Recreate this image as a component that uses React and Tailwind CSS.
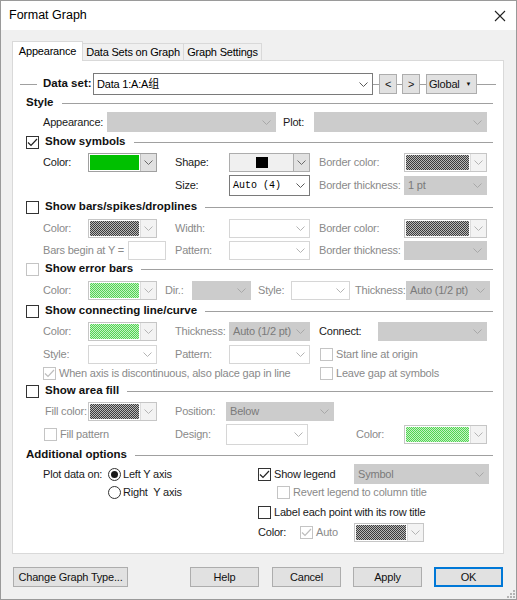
import React from 'react';

const sans = "font-['Liberation_Sans','Noto_Sans_CJK_SC',sans-serif]";

const grayChecker = 'bg-[image:repeating-conic-gradient(#3c3c3c_0_25%,#b8b8b8_0_50%)] bg-[length:2px_2px]';
const greenChecker = 'bg-[image:repeating-conic-gradient(#52d452_0_25%,#c4f2c4_0_50%)] bg-[length:2px_2px]';

function Chevron({ color = '#5a5a5a' }) {
  return (
    <svg width="9" height="5" viewBox="0 0 9 5">
      <polyline points="0.5,0.5 4.5,4.5 8.5,0.5" fill="none" stroke={color} strokeWidth="1" />
    </svg>
  );
}

function Combo({ className = '', kind = 'white', text, mono, h = 'h-[19px]' }) {
  const box = {
    white: 'border-[#7a7a7a] bg-white',
    faint: 'border-[#d6d6d6] bg-white',
    gray: 'border-[#cccccc] bg-[#cccccc]'
  };
  const chev = { white: '#5a5a5a', faint: '#b4b4b4', gray: '#a8a8a8' };
  return (
    <div className={`flex shrink-0 items-center border ${h} ${box[kind]} ${className}`}>
      <span
        className={`flex-1 truncate pl-[3px] ${
          mono ? "font-['Liberation_Mono',monospace] text-[10px] tracking-normal" : ''
        } ${kind === 'gray' ? 'text-[#7a7a7a]' : 'text-black'}`}
      >
        {text}
      </span>
      <span className="flex w-[17px] justify-center">
        <Chevron color={chev[kind]} />
      </span>
    </div>
  );
}

function ColorCombo({ className = '', fill, disabled }) {
  return (
    <div
      className={`flex h-[19px] shrink-0 border bg-white ${
        disabled ? 'border-[#c6c6c6]' : 'border-[#a0a0a0]'
      } ${className}`}
    >
      <div className="flex-1 p-[1px]">
        <div className={`h-full w-full ${fill}`} />
      </div>
      <div
        className={`flex w-[16px] items-center justify-center border-l ${
          disabled ? 'border-[#dcdcdc] bg-[#f3f3f3]' : 'border-[#bdbdbd] bg-[#e1e1e1]'
        }`}
      >
        <Chevron color={disabled ? '#b4b4b4' : '#6a6a6a'} />
      </div>
    </div>
  );
}

function Check({ checked, disabled }) {
  const c = disabled ? '#bdbdbd' : '#222222';
  return (
    <span
      className={`flex h-[13px] w-[13px] shrink-0 items-center justify-center border bg-white ${
        disabled ? 'border-[#c4c4c4]' : 'border-[#333333]'
      }`}
    >
      {checked ? (
        <svg width="11" height="9" viewBox="0 0 11 9">
          <polyline points="1,4.5 4,7.5 10,1" fill="none" stroke={c} strokeWidth="1.2" />
        </svg>
      ) : null}
    </span>
  );
}

function Radio({ on }) {
  return (
    <span className="flex h-[13px] w-[13px] shrink-0 items-center justify-center rounded-full border border-[#333333] bg-white">
      {on ? <span className="h-[7px] w-[7px] rounded-full bg-[#1a1a1a]" /> : null}
    </span>
  );
}

function Label({ className = '', dim, children }) {
  return (
    <span className={`shrink-0 whitespace-nowrap ${dim ? 'text-[#8a8a8a]' : 'text-[#1a1a1a]'} ${className}`}>
      {children}
    </span>
  );
}

function Header({ h, check, checked, disabled, children }) {
  return (
    <div className={`flex items-center pl-[13px] pr-[10px] ${h}`}>
      {check ? <Check checked={checked} disabled={disabled} /> : null}
      <span className={`text-[11.5px] font-bold tracking-normal text-[#111111] ${check ? 'ml-[6px]' : ''}`}>
        {children}
      </span>
      <div className="ml-[8px] h-px flex-1 bg-[#a0a0a0]" />
    </div>
  );
}

function Btn({ className = '', children, primary }) {
  return (
    <div
      className={`flex h-[20px] shrink-0 items-center justify-center bg-[#e1e1e1] text-[#111111] ${
        primary ? 'border-2 border-[#0078d7]' : 'border border-[#adadad]'
      } ${className}`}
    >
      {children}
    </div>
  );
}

function Line({ className = '' }) {
  return <div className={`h-px shrink-0 bg-[#a0a0a0] ${className}`} />;
}

export default function App() {
  return (
    <div className={`${sans} relative h-[600px] w-[517px] border border-[#9a9a9a] bg-[#f0f0f0] text-[11px] tracking-[-0.2px]`}>
      {/* title bar */}
      <div className="flex h-[29px] items-center justify-between bg-white pl-[8px] pr-[10px]">
        <span className="text-[12.5px] tracking-normal text-black">Format Graph</span>
        <svg width="12" height="12" viewBox="0 0 12 12">
          <path d="M1 1 L11 11 M11 1 L1 11" stroke="#222" strokeWidth="1.1" />
        </svg>
      </div>

      <div className="pt-[11px]">
        {/* tabs */}
        <div className="flex h-[19px] items-end pl-[11px]">
          <div className="relative z-10 -mb-px flex h-[20px] w-[71px] items-center justify-center border border-b-0 border-[#d9d9d9] bg-white">
            Appearance
          </div>
          <div className="flex h-[17px] w-[101px] items-center justify-center border border-b-0 border-l-0 border-[#d9d9d9] bg-[#f0f0f0]">
            Data Sets on Graph
          </div>
          <div className="flex h-[17px] w-[78px] items-center justify-center border border-b-0 border-l-0 border-[#d9d9d9] bg-[#f0f0f0]">
            Graph Settings
          </div>
        </div>

        {/* tab page */}
        <div className="ml-[11px] w-[492px] border border-[#d9d9d9] bg-white pb-[14px] pt-[12px]">
          {/* data set picker */}
          <div className="flex h-[22px] items-center">
            <Line className="ml-[7px] w-[17px]" />
            <span className="ml-[6px] w-[50px] shrink-0 text-[11.5px] font-bold tracking-normal text-[#111111]">Data set:</span>
            <Combo className="w-[280px]" h="h-[22px]" text="Data 1:A:A组" />
            <Line className="w-[6px]" />
            <Btn className="w-[18px]">&lt;</Btn>
            <Line className="w-[5px]" />
            <Btn className="w-[18px]">&gt;</Btn>
            <Line className="w-[6px]" />
            <Btn className="w-[51px] justify-start pl-[2px]">
              <span>Global</span>
              <span className="ml-[6px] text-[6px]">▼</span>
            </Btn>
            <Line className="w-[19px]" />
          </div>

          <Header h="h-[16px]">Style</Header>
          <div className="flex h-[22px] items-center pl-[30px]">
            <Label className="w-[64px]">Appearance:</Label>
            <Combo className="w-[169px]" kind="gray" h="h-[20px]" />
            <Label className="ml-[7px] w-[31px]">Plot:</Label>
            <Combo className="w-[173px]" kind="gray" h="h-[20px]" />
          </div>

          <Header h="h-[18px]" check checked>Show symbols</Header>
          <div className="flex h-[22px] items-center pl-[30px]">
            <Label className="w-[45px]">Color:</Label>
            <ColorCombo className="w-[69px]" fill="bg-[#00c000]" />
            <Label className="ml-[18px] w-[54px]">Shape:</Label>
            <div className="flex h-[19px] w-[81px] shrink-0 border border-[#adadad] bg-[#f0f0f0]">
              <div className="flex flex-1 items-center justify-center">
                <div className="h-[11px] w-[12px] bg-black" />
              </div>
              <div className="flex w-[16px] items-center justify-center border-l border-[#adadad] bg-[#e1e1e1]">
                <Chevron color="#6a6a6a" />
              </div>
            </div>
            <Label dim className="ml-[9px] w-[85px]">Border color:</Label>
            <ColorCombo className="w-[83px]" fill={grayChecker} disabled />
          </div>
          <div className="flex h-[24px] items-center pl-[30px]">
            <div className="w-[114px] shrink-0" />
            <Label className="ml-[18px] w-[54px]">Size:</Label>
            <Combo className="w-[81px]" h="h-[21px]" text="Auto (4)" mono />
            <Label dim className="ml-[9px] w-[85px]">Border thickness:</Label>
            <Combo className="w-[83px]" kind="gray" text="1 pt" />
          </div>

          <Header h="h-[20px]" check>Show bars/spikes/droplines</Header>
          <div className="flex h-[22px] items-center pl-[30px]">
            <Label dim className="w-[45px]">Color:</Label>
            <ColorCombo className="w-[69px]" fill={grayChecker} disabled />
            <Label dim className="ml-[18px] w-[54px]">Width:</Label>
            <Combo className="w-[81px]" kind="faint" />
            <Label dim className="ml-[9px] w-[85px]">Border color:</Label>
            <ColorCombo className="w-[83px]" fill={grayChecker} disabled />
          </div>
          <div className="flex h-[22px] items-center pl-[30px]">
            <Label dim className="w-[85px]">Bars begin at Y =</Label>
            <div className="h-[19px] w-[38px] shrink-0 border border-[#d6d6d6] bg-white" />
            <Label dim className="ml-[9px] w-[54px]">Pattern:</Label>
            <Combo className="w-[81px]" kind="faint" />
            <Label dim className="ml-[9px] w-[85px]">Border thickness:</Label>
            <Combo className="w-[83px]" kind="gray" />
          </div>

          <Header h="h-[16px]" check disabled>Show error bars</Header>
          <div className="flex h-[26px] items-center pl-[30px]">
            <Label dim className="w-[45px]">Color:</Label>
            <ColorCombo className="w-[69px]" fill={greenChecker} disabled />
            <Label dim className="ml-[8px] w-[27px]">Dir.:</Label>
            <Combo className="w-[59px]" kind="gray" />
            <Label dim className="ml-[7px] w-[33px]">Style:</Label>
            <Combo className="w-[59px]" kind="faint" />
            <Label dim className="ml-[5px] w-[51px]">Thickness:</Label>
            <Combo className="w-[84px]" kind="gray" text="Auto (1/2 pt)" />
          </div>

          <Header h="h-[16px]" check>Show connecting line/curve</Header>
          <div className="flex h-[24px] items-center pl-[30px]">
            <Label dim className="w-[45px]">Color:</Label>
            <ColorCombo className="w-[69px]" fill={greenChecker} disabled />
            <Label dim className="ml-[18px] w-[54px]">Thickness:</Label>
            <Combo className="w-[81px]" kind="gray" text="Auto (1/2 pt)" />
            <Label className="ml-[9px] w-[59px]">Connect:</Label>
            <Combo className="w-[109px]" kind="gray" />
          </div>
          <div className="flex h-[22px] items-center pl-[30px]">
            <Label dim className="w-[45px]">Style:</Label>
            <Combo className="w-[69px]" kind="faint" />
            <Label dim className="ml-[18px] w-[54px]">Pattern:</Label>
            <Combo className="w-[81px]" kind="faint" />
            <div className="ml-[10px] flex items-center">
              <Check disabled />
              <Label dim className="ml-[3px]">Start line at origin</Label>
            </div>
          </div>
          <div className="flex h-[16px] items-center pl-[30px]">
            <div className="flex w-[277px] shrink-0 items-center">
              <Check checked disabled />
              <Label dim className="ml-[3px]">When axis is discontinuous, also place gap in line</Label>
            </div>
            <Check disabled />
            <Label dim className="ml-[3px]">Leave gap at symbols</Label>
          </div>

          <Header h="h-[20px]" check>Show area fill</Header>
          <div className="flex h-[20px] items-center pl-[30px]">
            <Label dim className="w-[45px] pl-[2px]">Fill color:</Label>
            <ColorCombo className="w-[69px]" fill={grayChecker} disabled />
            <Label dim className="ml-[18px] w-[51px]">Position:</Label>
            <Combo className="w-[108px]" kind="gray" text="Below" />
          </div>
          <div className="flex h-[26px] items-center pl-[30px]">
            <div className="flex w-[132px] shrink-0 items-center pl-[1px]">
              <Check disabled />
              <Label dim className="ml-[3px]">Fill pattern</Label>
            </div>
            <Label dim className="w-[51px]">Design:</Label>
            <Combo className="w-[82px]" kind="faint" h="h-[21px]" />
            <Label dim className="ml-[48px] w-[48px]">Color:</Label>
            <ColorCombo className="w-[83px]" fill={greenChecker} disabled />
          </div>

          <Header h="h-[16px]">Additional options</Header>
          <div className="flex">
            <div className="w-[245px] shrink-0 pl-[30px]">
              <div className="flex h-[22px] items-center">
                <Label className="w-[65px]">Plot data on:</Label>
                <Radio on />
                <Label className="ml-[2px]">Left Y axis</Label>
              </div>
              <div className="flex h-[14px] items-center pl-[65px]">
                <Radio />
                <Label className="ml-[2px] whitespace-pre">Right  Y axis</Label>
              </div>
            </div>
            <div className="flex-1">
              <div className="flex h-[22px] items-center">
                <div className="flex w-[96px] shrink-0 items-center">
                  <Check checked />
                  <Label className="ml-[3px]">Show legend</Label>
                </div>
                <Combo className="w-[135px]" kind="gray" h="h-[20px]" text="Symbol" />
              </div>
              <div className="flex h-[14px] items-center pl-[19px]">
                <Check disabled />
                <Label dim className="ml-[3px]">Revert legend to column title</Label>
              </div>
              <div className="flex h-[26px] items-center">
                <Check />
                <Label className="ml-[3px]">Label each point with its row title</Label>
              </div>
              <div className="flex h-[14px] items-center">
                <Label className="w-[42px]">Color:</Label>
                <div className="flex w-[54px] shrink-0 items-center">
                  <Check checked disabled />
                  <Label dim className="ml-[3px]">Auto</Label>
                </div>
                <ColorCombo className="w-[70px]" fill={grayChecker} disabled />
              </div>
            </div>
          </div>
        </div>

        {/* dialog buttons */}
        <div className="mt-[13px] flex pl-[12px]">
          <Btn className="w-[115px]">Change Graph Type...</Btn>
          <Btn className="ml-[62px] w-[69px]">Help</Btn>
          <Btn className="ml-[13px] w-[69px]">Cancel</Btn>
          <Btn className="ml-[12px] w-[69px]">Apply</Btn>
          <Btn className="ml-[12px] w-[69px]" primary>OK</Btn>
        </div>
      </div>

      {/* resize grip */}
      <svg className="absolute bottom-[1px] right-[1px]" width="10" height="10" viewBox="0 0 10 10">
        <g fill="#b4b4b4">
          <rect x="8" y="2" width="2" height="2" />
          <rect x="5" y="5" width="2" height="2" />
          <rect x="8" y="5" width="2" height="2" />
          <rect x="2" y="8" width="2" height="2" />
          <rect x="5" y="8" width="2" height="2" />
          <rect x="8" y="8" width="2" height="2" />
        </g>
      </svg>
    </div>
  );
}
